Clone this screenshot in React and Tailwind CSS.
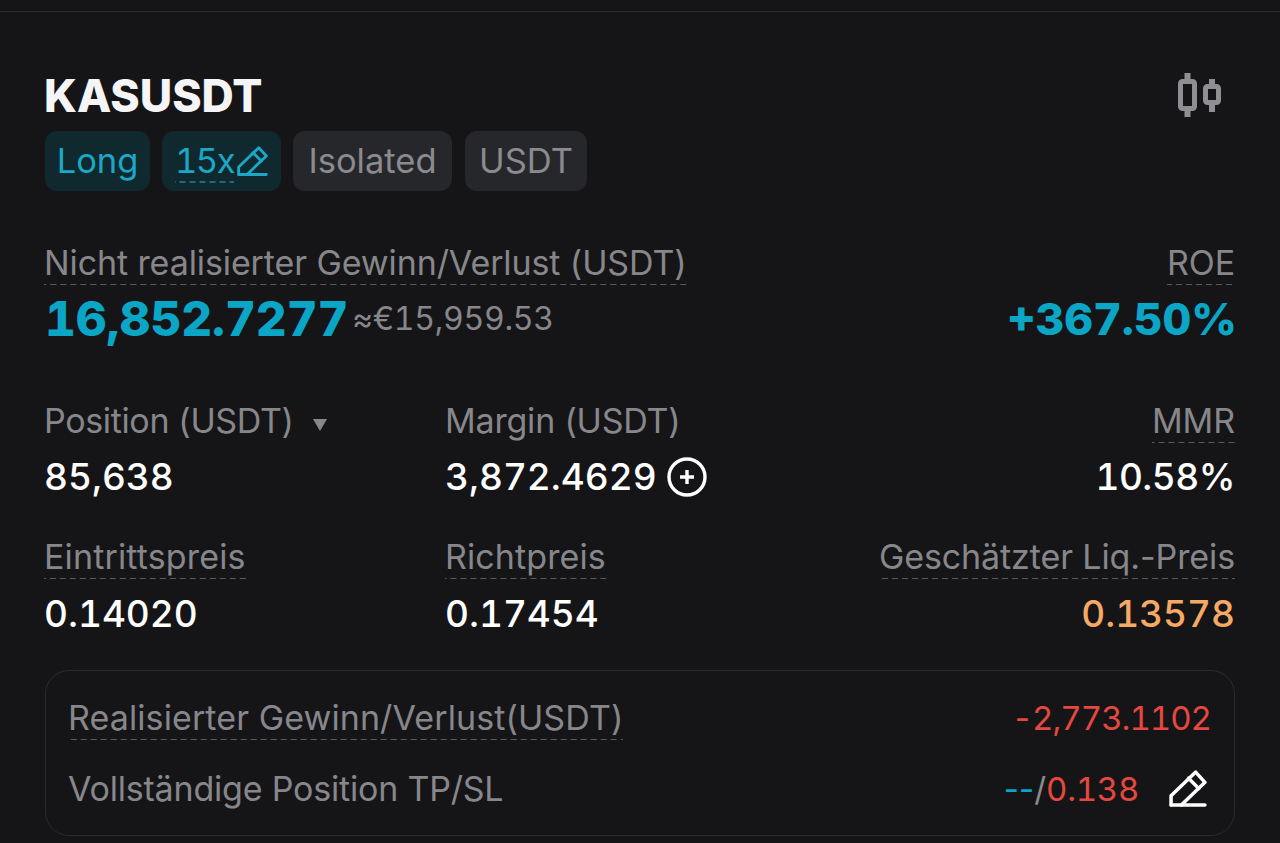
const Pencil = ({ className, strokeWidth = 3.4 }) => (
  <svg viewBox="0 0 37 37" fill="none" stroke="currentColor" strokeWidth={strokeWidth} strokeLinejoin="round" strokeLinecap="round" className={className}>
    <path d="M2 34 V25 L26 2 L35 12 L12 34" />
    <path d="M19 8 L29 18" />
    <path d="M2 34 H35" />
  </svg>
);

const Candles = () => (
  <svg viewBox="0 0 44 44" fill="none" stroke="#8e8e93" strokeWidth="5" className="w-[44px] h-[44px]">
    <rect x="2.5" y="8.5" width="14" height="27" rx="2" />
    <path d="M9.5 0 V6 M9.5 38 V44" strokeWidth="6" />
    <rect x="27.5" y="13.5" width="13" height="16" rx="2" />
    <path d="M34 6 V11 M34 32 V39" strokeWidth="6" />
  </svg>
);

const Tag = ({ children, cyan, className }) => (
  <div className={`h-[60px] rounded-[12px] flex items-center justify-center ${className} ${cyan ? 'bg-[#10292f] text-[#1ba7c6]' : 'bg-[#26272b] text-[#8b8b8f]'}`}>
    {children}
  </div>
);

const dashes = 'bg-[linear-gradient(to_right,#5a5a5e_6px,transparent_6px)] bg-[length:10px_1px] bg-bottom bg-repeat-x';

const Label = ({ children, dashed, className = 'tracking-[-0.1px]' }) => (
  <span className={`inline-block text-[34px] leading-[44px] text-[#87878b] ${className} ${dashes && dashed ? dashes : ''}`}>
    {children}
  </span>
);

const Value = ({ children, className = 'text-white' }) => (
  <div className={`text-[37px] leading-[44px] font-medium tabular-nums ${className}`}>{children}</div>
);

export default function App() {
  return (
    <div className="w-[1280px] h-[843px] overflow-hidden bg-[#151517] font-['Inter',sans-serif] pt-[11px]">
      <div className="h-px bg-[#2c2d30]" />
      <div className="px-[45px] pt-[57px]">
        {/* Header */}
        <div className="flex justify-between items-start">
          <h1 className="text-[44.6px] leading-[54px] font-extrabold text-[#f5f5f7] -ml-px">KASUSDT</h1>
          <div className="mt-[4px] mr-[13px]"><Candles /></div>
        </div>
        <div className="flex gap-[12px] mt-[8px] text-[34.5px] leading-[40px]">
          <Tag cyan className="w-[105px]">Long</Tag>
          <Tag cyan className="w-[119px]">
            <span className="leading-[44px] tabular-nums tracking-[-1.5px] bg-[linear-gradient(to_right,#1a6d80_6px,transparent_6px)] bg-[length:10px_2px] bg-bottom bg-repeat-x">15x</span>
            <Pencil className="w-[31px] h-[31px] ml-[3px]" />
          </Tag>
          <Tag className="w-[159px]">Isolated</Tag>
          <Tag className="w-[122px] ml-px">USDT</Tag>
        </div>

        {/* PnL */}
        <div className="flex justify-between mt-[50px]">
          <div>
            <div className="-ml-px"><Label dashed>Nicht realisierter Gewinn/Verlust (USDT)</Label></div>
            <div className="flex items-center mt-[4px]">
              <span className="text-[47.8px] leading-[60px] font-extrabold text-[#0ba5c6] tabular-nums">16,852.7277</span>
              <span className="text-[32px] leading-[40px] text-[#87878b] ml-[4px] tabular-nums tracking-[-0.3px]">≈€15,959.53</span>
            </div>
          </div>
          <div className="text-right">
            <Label dashed>ROE</Label>
            <div className="text-[44.5px] leading-[60px] font-extrabold text-[#0ba5c6] mt-[4px] tabular-nums -mr-[2px]">+367.50%</div>
          </div>
        </div>

        {/* Position row */}
        <div className="grid grid-cols-[400px_1fr_1fr] mt-[50px]">
          <div className="-ml-px">
            <div className="flex items-center">
              <Label className="tracking-[-0.35px]">Position (USDT)</Label>
              <svg viewBox="0 0 16 14" className="w-[16px] h-[14px] ml-[18px] mt-[7px]" fill="#87878b"><path d="M1 1 H15 L8 13 Z" /></svg>
            </div>
            <Value className="text-white mt-[12px]">85,638</Value>
          </div>
          <div>
            <Label className="tracking-[-0.2px]">Margin (USDT)</Label>
            <div className="flex items-center gap-[10px] mt-[12px]">
              <Value>3,872.4629</Value>
              <svg viewBox="0 0 40 40" className="w-[40px] h-[40px] -mt-[1px]" fill="none" stroke="white">
                <circle cx="20" cy="20" r="18" strokeWidth="3.4" />
                <path d="M20 13 V27 M13 20 H27" strokeWidth="3.4" />
              </svg>
            </div>
          </div>
          <div className="text-right">
            <Label dashed>MMR</Label>
            <Value className="text-white mt-[12px] tracking-[-0.5px]">10.58%</Value>
          </div>
        </div>

        {/* Price row */}
        <div className="grid grid-cols-[400px_1fr_auto] mt-[36px]">
          <div className="-ml-px">
            <Label dashed className="tracking-[0.15px]">Eintrittspreis</Label>
            <Value className="text-white mt-[13px]">0.14020</Value>
          </div>
          <div>
            <Label dashed className="tracking-[0.1px]">Richtpreis</Label>
            <Value className="text-white mt-[13px]">0.17454</Value>
          </div>
          <div className="text-right">
            <Label dashed>Geschätzter Liq.-Preis</Label>
            <Value className="text-[#f5a964] mt-[13px]">0.13578</Value>
          </div>
        </div>

        {/* Bottom card */}
        <div className="mt-[34px] border border-[#2a2b2e] rounded-[24px] h-[166px] pl-[22px] pr-[23px] pt-[25px]">
          <div className="flex justify-between items-center">
            <Label dashed className="tracking-[0.1px]">Realisierter Gewinn/Verlust(USDT)</Label>
            <span className="text-[33px] leading-[40px] text-[#e5483f] tabular-nums tracking-[-1px]">-2,773.1102</span>
          </div>
          <div className="flex justify-between items-center mt-[27px]">
            <Label className="tracking-[-0.2px]">Vollständige Position TP/SL</Label>
            <div className="flex items-center text-[33px] leading-[40px]">
              <span className="text-[#0ba5c6]">--</span>
              <span className="text-[#8b8b8f]">/</span>
              <span className="text-[#e5483f] tabular-nums tracking-[-0.3px]">0.138</span>
              <Pencil className="w-[38px] h-[38px] text-white ml-[30px] mr-[4px]" />
            </div>
          </div>
        </div>
      </div>
    </div>
  );
}
